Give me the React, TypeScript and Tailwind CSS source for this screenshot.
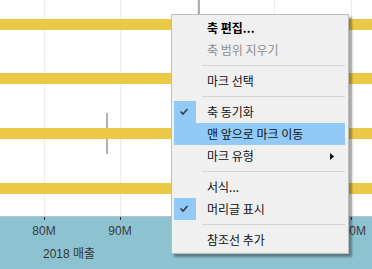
import React from "react";

const FONT = { fontFamily: '"Noto Sans CJK KR", "Liberation Sans", sans-serif' };

function Check() {
  return (
    <svg width="22" height="22" viewBox="0 0 22 22">
      <polyline points="6.5,10.5 9,13 13.5,8" fill="none" stroke="#3a3a3a" strokeWidth="1.6" />
    </svg>
  );
}

type Item = { label: string; bold?: boolean; disabled?: boolean; checked?: boolean; hover?: boolean; sub?: boolean };

function Row({ it }: { it: Item }) {
  return (
    <div className={`flex h-[22px] items-center ${it.hover ? "bg-[#91c9f7]" : ""}`}>
      <div className={`flex h-[22px] w-[22px] items-center justify-center ${it.checked ? "bg-[#91c9f7]" : ""}`}>
        {it.checked ? <Check /> : null}
      </div>
      <div
        className={`ml-[11px] flex-1 text-[12px] leading-[22px] ${it.bold ? "font-bold text-black" : it.disabled ? "text-[#8d8d8d]" : "text-[#111]"}`}
        style={FONT}
      >
        {it.label}
      </div>
      {it.sub ? (
        <svg width="4" height="7" viewBox="0 0 4 7" className="mr-[11px]">
          <polygon points="0,0 4,3.5 0,7" fill="#000" />
        </svg>
      ) : null}
    </div>
  );
}

function Sep() {
  return <div className="my-[4px] ml-[28px] h-px bg-[#d4d4d4]" />;
}

const TICKS = [
  { x: 44, label: "80M" },
  { x: 120, label: "90M" },
  { x: 197, label: "" },
  { x: 274, label: "" },
  { x: 351, label: "100M" },
];

const ITEMS: (Item | "sep")[] = [
  { label: "축 편집...", bold: true },
  { label: "축 범위 지우기", disabled: true },
  "sep",
  { label: "마크 선택" },
  "sep",
  { label: "축 동기화", checked: true },
  { label: "맨 앞으로 마크 이동", hover: true },
  { label: "마크 유형", sub: true },
  "sep",
  { label: "서식..." },
  { label: "머리글 표시", checked: true },
  "sep",
  { label: "참조선 추가" },
];

export default function App() {
  return (
    <div
      className="relative flex h-[269px] w-[372px] flex-col overflow-hidden bg-white"
      style={{ fontFamily: '"Liberation Sans", "Noto Sans CJK KR", sans-serif' }}
    >
      {/* chart area */}
      <div className="relative h-[216px]">
        {TICKS.map((t) => (
          <div key={t.x} className="absolute top-0 h-[216px] w-px bg-[#ececec]" style={{ left: t.x }} />
        ))}
        <div className="absolute left-[106px] top-[113px] h-[41px] w-[2px] bg-[#b7aca7]" />
        <div className="absolute left-[198px] top-0 h-[40px] w-[2px] bg-[#b7aca7]" />
        <div className="relative flex flex-col gap-[44px] pt-[19px]">
          <div className="-mb-px h-[11px] bg-[#ebc946]" />
          <div className="h-[11px] bg-[#ebc946]" />
          <div className="h-[11px] bg-[#ebc946]" />
          <div className="h-[11px] bg-[#ebc946]" />
        </div>
      </div>
      {/* axis */}
      <div className="flex flex-1 flex-col border-t border-[#b9c3c6] bg-[#8dc3d1] pt-[7px]">
        <div className="relative h-[14px]">
          {TICKS.map((t) => (
            <React.Fragment key={t.x}>
              <div className="absolute top-[-7px] h-[3px] w-px bg-[#333]" style={{ left: t.x }} />
              <div
                className="absolute top-0 w-[60px] text-center text-[12px] leading-[14px] text-[#3a3a3a]"
                style={{ left: t.x - 30 }}
              >
                {t.label}
              </div>
            </React.Fragment>
          ))}
        </div>
        <div className="mt-[9px] pl-[43px] text-[12px] leading-[14px] text-[#333]">2018 매출</div>
      </div>

      {/* context menu */}
      <div className="absolute left-[171px] top-[14px] flex w-[178px] flex-col border border-[#bdbdbd] bg-[#f0f0f0] pb-[2px] pl-[2px] pr-[3px] pt-[2px] shadow-[3px_3px_2px_rgba(0,0,0,0.35)]">
        {ITEMS.map((it, i) => (it === "sep" ? <Sep key={i} /> : <Row key={i} it={it} />))}
      </div>
    </div>
  );
}
